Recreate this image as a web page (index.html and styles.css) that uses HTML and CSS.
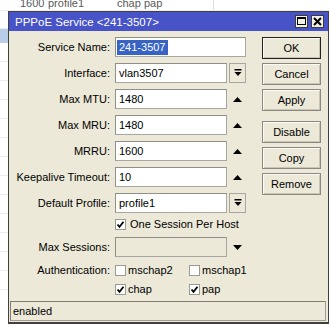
FILE: index.html
```html
<!DOCTYPE html>
<html>
<head>
<meta charset="utf-8">
<link rel="stylesheet" href="styles.css">
</head>
<body>
<div class="list">
  <div class="lrow top"><span class="c1">1600</span><span class="c2">profile1</span><span class="c3">chap pap</span><span class="c4"></span></div>
  <div class="lrow r2"></div>
  <div class="lrow sel"></div>
  <div class="lrow"></div>
  <div class="lrow"></div>
  <div class="lrow"></div>
  <div class="lrow"></div>
  <div class="lrow"></div>
  <div class="lrow"></div>
  <div class="lrow"></div>
  <div class="lrow"></div>
  <div class="lrow"></div>
  <div class="lrow"></div>
  <div class="lrow"></div>
  <div class="lrow"></div>
  <div class="lrow"></div>
</div>

<div class="win">
  <div class="title">
    <span class="ttext">PPPoE Service &lt;241-3507&gt;</span>
    <span class="tbtns">
      <span class="tb"><svg width="11" height="11" viewBox="0 0 11 11"><rect x="1.5" y="1.5" width="8" height="7" fill="none" stroke="#000" stroke-width="1"/><rect x="1" y="1" width="9" height="2" fill="#000"/></svg></span>
      <span class="tb"><svg width="11" height="11" viewBox="0 0 11 11"><path d="M2 2 L9 9 M9 2 L2 9" stroke="#000" stroke-width="2"/></svg></span>
    </span>
  </div>
  <div class="main">
    <div class="form">
      <div class="lbl">Service Name:</div>
      <div class="ctl"><div class="field full sn"><span class="selected">241-3507</span></div></div>

      <div class="lbl">Interface:</div>
      <div class="ctl"><div class="field">vlan3507</div><div class="dd"><svg width="8" height="8" viewBox="0 0 8 8"><rect x="0.5" y="0" width="7" height="1.5" fill="#000"/><polygon points="0.5,3 7.5,3 4,7" fill="#000"/></svg></div></div>

      <div class="lbl">Max MTU:</div>
      <div class="ctl"><div class="field">1480</div><div class="arr"><svg width="9" height="5" viewBox="0 0 9 5"><polygon points="0,5 9,5 4.5,0" fill="#000"/></svg></div></div>

      <div class="lbl">Max MRU:</div>
      <div class="ctl"><div class="field">1480</div><div class="arr"><svg width="9" height="5" viewBox="0 0 9 5"><polygon points="0,5 9,5 4.5,0" fill="#000"/></svg></div></div>

      <div class="lbl">MRRU:</div>
      <div class="ctl"><div class="field">1600</div><div class="arr"><svg width="9" height="5" viewBox="0 0 9 5"><polygon points="0,5 9,5 4.5,0" fill="#000"/></svg></div></div>

      <div class="lbl">Keepalive Timeout:</div>
      <div class="ctl"><div class="field">10</div><div class="arr"><svg width="9" height="5" viewBox="0 0 9 5"><polygon points="0,5 9,5 4.5,0" fill="#000"/></svg></div></div>

      <div class="lbl">Default Profile:</div>
      <div class="ctl"><div class="field">profile1</div><div class="dd"><svg width="8" height="8" viewBox="0 0 8 8"><rect x="0.5" y="0" width="7" height="1.5" fill="#000"/><polygon points="0.5,3 7.5,3 4,7" fill="#000"/></svg></div></div>

      <div class="lbl"></div>
      <div class="ctl"><span class="cb"><svg width="9" height="9" viewBox="0 0 9 9"><polyline points="1.5,4.5 3.5,6.8 7.5,1.8" fill="none" stroke="#000" stroke-width="1.8"/></svg></span><span class="cbt">One Session Per Host</span></div>

      <div class="lbl">Max Sessions:</div>
      <div class="ctl"><div class="field dis"></div><div class="arr"><svg width="9" height="5" viewBox="0 0 9 5"><polygon points="0,0 9,0 4.5,5" fill="#000"/></svg></div></div>

      <div class="lbl">Authentication:</div>
      <div class="ctl auth">
        <span class="opt"><span class="cb"></span><span class="cbt">mschap2</span></span>
        <span class="opt"><span class="cb"></span><span class="cbt">mschap1</span></span>
      </div>

      <div class="lbl"></div>
      <div class="ctl auth">
        <span class="opt"><span class="cb"><svg width="9" height="9" viewBox="0 0 9 9"><polyline points="1.5,4.5 3.5,6.8 7.5,1.8" fill="none" stroke="#000" stroke-width="1.8"/></svg></span><span class="cbt">chap</span></span>
        <span class="opt"><span class="cb"><svg width="9" height="9" viewBox="0 0 9 9"><polyline points="1.5,4.5 3.5,6.8 7.5,1.8" fill="none" stroke="#000" stroke-width="1.8"/></svg></span><span class="cbt">pap</span></span>
      </div>
    </div>
    <div class="btns">
      <div class="btn def">OK</div>
      <div class="btn">Cancel</div>
      <div class="btn">Apply</div>
      <div class="btn sep">Disable</div>
      <div class="btn">Copy</div>
      <div class="btn">Remove</div>
    </div>
  </div>
  <div class="status">enabled</div>
</div>
</body>
</html>
```

FILE: styles.css
```css
html, body {
  margin: 0;
  padding: 0;
}
body {
  width: 329px;
  height: 325px;
  overflow: hidden;
  position: relative;
  background: #fff;
  font-family: "Liberation Sans", Arial, sans-serif;
  font-size: 11px;
  color: #000;
}

/* background list */
.list {
  margin-top: -3px;
}
.lrow {
  height: 18px;
  border-bottom: 1px solid #ededed;
  display: flex;
  line-height: 13px;
  color: #5a5a5a;
}
.lrow.top {
  height: 13px;
}
.lrow.r2 {
  height: 17px;
}
.lrow.sel {
  height: 13px;
  background: #b8cdea;
  border-bottom-color: #b8cdea;
}
.c1 {
  padding-left: 20px;
  width: 28px;
}
.c2 {
  width: 69px;
}
.c3 {
  width: 96px;
  border-right: 1px solid #dcdcdc;
}

/* window */
.win {
  position: absolute;
  left: 8px;
  top: 11px;
  width: 321px;
  height: 313px;
  box-sizing: border-box;
  border: 1px solid #404040;
  border-bottom-width: 2px;
  background: #ece9d8;
  display: flex;
  flex-direction: column;
}
.title {
  height: 19px;
  background: #4753c6;
  color: #fff;
  display: flex;
  align-items: center;
  justify-content: space-between;
  padding: 0 4px 0 6px;
  flex: none;
}
.ttext {
  font-size: 11.5px;
}
.tbtns {
  display: flex;
  gap: 3px;
}
.tb {
  width: 13px;
  height: 13px;
  box-sizing: border-box;
  background: #f3f1e6;
  border: 1px solid #3a3a3a;
  display: flex;
  align-items: center;
  justify-content: center;
}

.main {
  flex: 1;
  display: flex;
}
.form {
  display: grid;
  grid-template-columns: 101px 131px;
  grid-template-rows: repeat(7, 26px) 16px 30px 16px 22px;
  column-gap: 5px;
  align-items: center;
  padding-top: 3px;
}
.lbl {
  text-align: right;
  white-space: nowrap;
}
.ctl {
  display: flex;
  align-items: center;
  gap: 2px;
}
.field {
  width: 112px;
  height: 20px;
  box-sizing: border-box;
  background: #fff;
  border: 1px solid #a7a6a0;
  border-top-color: #8f8e88;
  border-left-color: #8f8e88;
  padding-left: 3px;
  line-height: 18px;
  white-space: nowrap;
}
.field.full {
  width: 131px;
}
.field.sn {
  padding-left: 1px;
  display: flex;
  align-items: center;
}
.field.dis {
  background: #ece9d8;
}
.selected {
  background: #3763c4;
  color: #fff;
  padding: 0 2px;
  line-height: 15px;
}
.dd {
  width: 17px;
  height: 20px;
  box-sizing: border-box;
  border: 1px solid #a7a6a0;
  display: flex;
  align-items: center;
  justify-content: center;
}
.arr {
  width: 17px;
  height: 20px;
  display: flex;
  align-items: center;
  justify-content: center;
}
.cb {
  width: 11px;
  height: 11px;
  box-sizing: border-box;
  border: 1px solid #9a9a94;
  background: #fff;
  display: inline-flex;
  align-items: center;
  justify-content: center;
  margin-right: 2px;
  flex: none;
}
.auth {
  display: grid;
  grid-template-columns: 74px auto;
  gap: 0;
}
.opt {
  display: flex;
  align-items: center;
}

.btns {
  display: flex;
  flex-direction: column;
  gap: 4px;
  padding-top: 6px;
  margin-left: 16px;
}
.btn {
  width: 59px;
  height: 22px;
  box-sizing: border-box;
  border: 1px solid #8a8880;
  box-shadow: inset 1px 1px #fbfaf4, inset -1px -1px #c9c6b6;
  display: flex;
  align-items: center;
  justify-content: center;
}
.btn.def {
  border-color: #222;
}
.btn.sep {
  margin-top: 6px;
}

.status {
  height: 20px;
  box-sizing: border-box;
  margin: 0 2px 1px 1px;
  border: 1px solid #a09e94;
  border-top-color: #7f7d74;
  border-left-color: #7f7d74;
  padding-left: 2px;
  line-height: 18px;
  flex: none;
}
```
